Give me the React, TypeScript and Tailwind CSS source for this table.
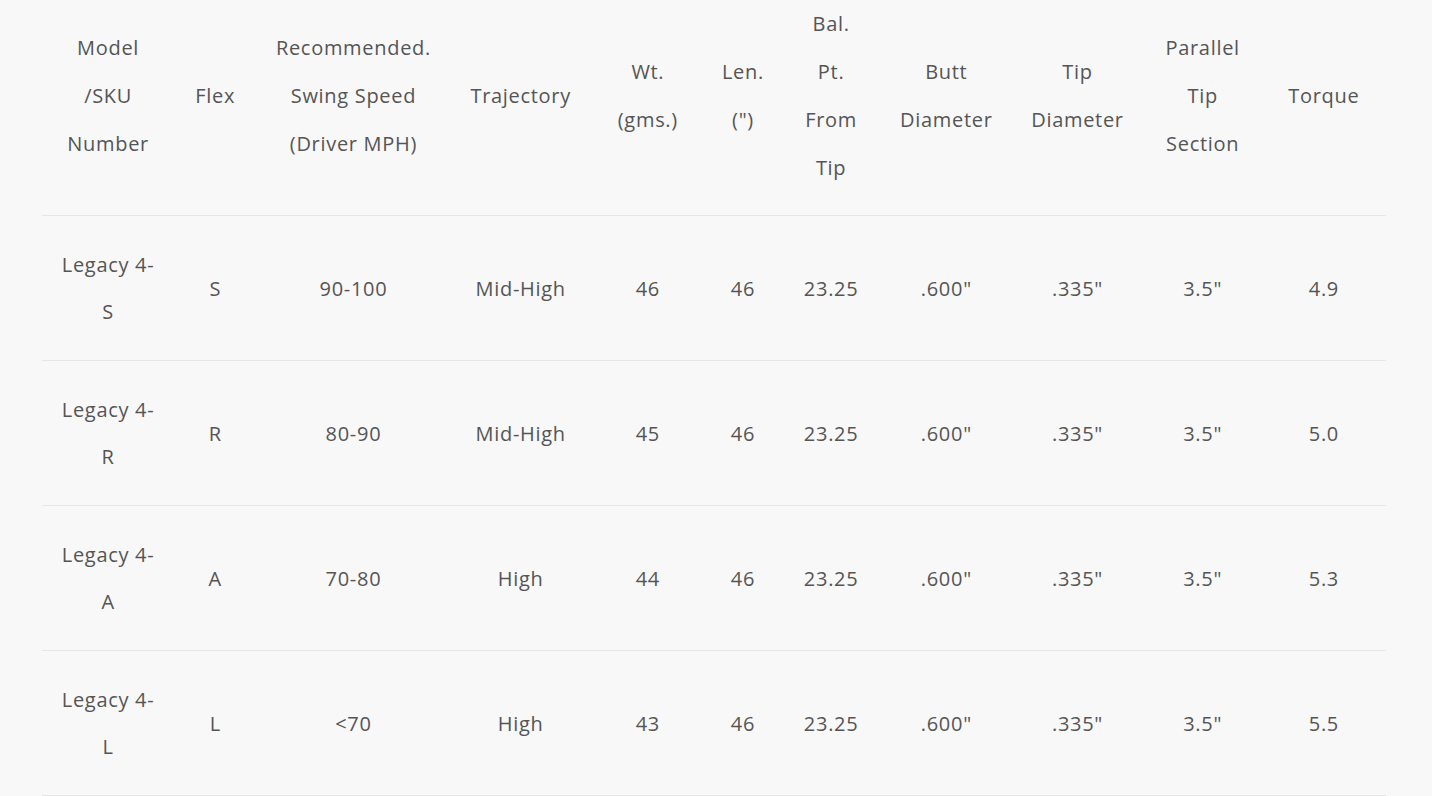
const columns: { head: string[]; width: string }[] = [
  { head: ["Model", "/SKU", "Number"], width: "w-[132px]" },
  { head: ["Flex"], width: "w-[82px]" },
  { head: ["Recommended.", "Swing Speed", "(Driver MPH)"], width: "w-[194px]" },
  { head: ["Trajectory"], width: "w-[140px]" },
  { head: ["Wt.", "(gms.)"], width: "w-[114px]" },
  { head: ["Len.", '(")'], width: "w-[76px]" },
  { head: ["Bal.", "Pt.", "From", "Tip"], width: "w-[100px]" },
  { head: ["Butt", "Diameter"], width: "w-[130px]" },
  { head: ["Tip", "Diameter"], width: "w-[132px]" },
  { head: ["Parallel", "Tip", "Section"], width: "w-[118px]" },
  { head: ["Torque"], width: "w-[124px]" },
];

const rows = [
  { flex: "S", speed: "90-100", traj: "Mid-High", wt: "46", torque: "4.9" },
  { flex: "R", speed: "80-90", traj: "Mid-High", wt: "45", torque: "5.0" },
  { flex: "A", speed: "70-80", traj: "High", wt: "44", torque: "5.3" },
  { flex: "L", speed: "<70", traj: "High", wt: "43", torque: "5.5" },
];

export default function App() {
  return (
    <div
      className="min-h-[796px] bg-[#f8f8f8] text-[#555] px-[42px] text-[20px] tracking-[0.7px]"
      style={{ fontFamily: '"Open Sans", "Liberation Sans", sans-serif' }}
    >
      <table className="w-[1344px] table-fixed border-collapse text-center">
        <colgroup>
          {columns.map((c, i) => (
            <col key={i} className={c.width} />
          ))}
        </colgroup>
        <thead>
          <tr className="border-b border-[#e6e6e6]">
            {columns.map((c, i) => (
              <th key={i} className="font-normal align-middle leading-[48px] pt-0 pb-[23px] px-1">
                {c.head.map((line, j) => (
                  <div key={j}>{line}</div>
                ))}
              </th>
            ))}
          </tr>
        </thead>
        <tbody>
          {rows.map((r) => {
            const cells = [
              <>
                <div>Legacy 4-</div>
                <div>{r.flex}</div>
              </>,
              r.flex,
              r.speed,
              r.traj,
              r.wt,
              "46",
              "23.25",
              '.600"',
              '.335"',
              '3.5"',
              r.torque,
            ];
            return (
              <tr key={r.flex} className="border-b border-[#e6e6e6]">
                {cells.map((cell, i) => (
                  <td key={i} className="align-middle leading-[47px] py-[25px] px-1">
                    {cell}
                  </td>
                ))}
              </tr>
            );
          })}
        </tbody>
      </table>
    </div>
  );
}
